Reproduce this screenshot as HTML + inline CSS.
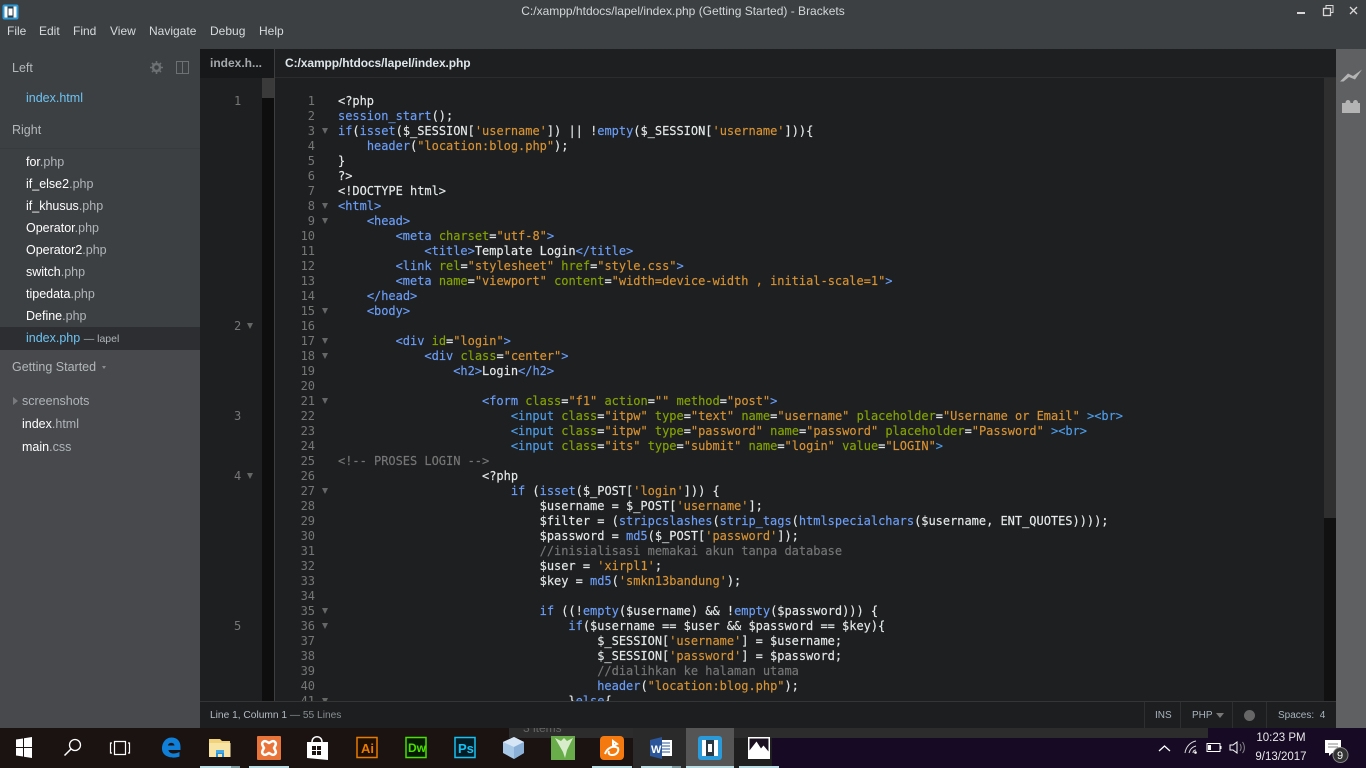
<!DOCTYPE html>
<html><head><meta charset="utf-8"><style>
*{box-sizing:border-box;margin:0;padding:0}
html,body{width:1366px;height:768px;overflow:hidden;background:#170a24;font-family:"Liberation Sans",sans-serif}
div,span.abs{position:absolute}
#code,#nums,#lnums{font:12px/15px "DejaVu Sans Mono",monospace;white-space:pre;position:absolute}
#code{left:338px;top:94px;color:#e6e9e9;letter-spacing:-.024px;-webkit-text-stroke:.15px}
#nums{left:295px;width:20px;top:94px;text-align:right;color:#767676;letter-spacing:-.024px}
.t{color:#6c9ef8}.i{color:#4f9de8}.a{color:#85a300}.s{color:#d89333}.c{color:#767676}
.m{font-size:12px;color:#d6dadd;top:24px;font-family:"Liberation Sans",sans-serif}
.f{left:26px;font-size:12.5px;color:#fff;line-height:16px}
.f b{font-weight:normal;color:#b0b5b9}
.h{color:#b3b7ba;font-size:12.5px;left:12px;line-height:16px}
.g{left:234px;color:#767676;font:12px/15px "DejaVu Sans Mono",monospace}
.ar{width:0;height:0;border-left:3px solid transparent;border-right:3px solid transparent;border-top:6px solid #666}
.st{font-size:10px;color:#a8b4bd;top:709px;line-height:14px}
.dv{width:1px;top:702px;height:26px;background:#2d2f31}
.ul{top:766px;height:2px;background:#b9dde2}
.ud{top:766px;height:2px;background:#7f9a9e}
</style></head><body>
<!-- taskbar bg -->
<div style="left:0;top:728px;width:772px;height:40px;background:#1b1311"></div>
<div style="left:633px;top:728px;width:139px;height:40px;background:#1f1f1f"></div>
<div style="left:509px;top:728px;width:699px;height:10px;background:#2c2c2c"></div>
<div style="left:523px;top:721px;font-size:12px;line-height:14px;color:#666">3 items</div>
<div style="left:633px;top:728px;width:53px;height:40px;background:#2a2a2a"></div>
<div style="left:686px;top:728px;width:48px;height:40px;background:#555"></div>
<!-- title -->
<div style="left:0;top:0;width:1366px;height:49px;background:#3d4043"></div>
<div style="left:0;top:49px;width:200px;height:301px;background:#3d4043"></div>
<div style="left:0;top:350px;width:200px;height:378px;background:#47494d"></div>
<div style="left:0;top:0;width:1366px;text-align:center;color:#d4d7d9;font-size:12px;line-height:22px;padding-left:0">C:/xampp/htdocs/lapel/index.php (Getting Started) - Brackets</div>
<svg style="position:absolute;left:2px;top:4px" width="17" height="16"><rect width="16" height="15" x=".5" y=".5" rx="2" fill="#2a9ad8"/><rect x="2.500" y="2.500" width="12" height="11" fill="#fff"/><rect x="5.500" y="2.500" width="6" height="11" fill="#2a3a44"/><rect x="6.500" y="4.500" width="4" height="7" fill="#fff"/></svg>
<span class="abs m" style="position:absolute;left:7px">File</span>
<span class="abs m" style="position:absolute;left:39px">Edit</span>
<span class="abs m" style="position:absolute;left:73px">Find</span>
<span class="abs m" style="position:absolute;left:110px">View</span>
<span class="abs m" style="position:absolute;left:149px">Navigate</span>
<span class="abs m" style="position:absolute;left:210px">Debug</span>
<span class="abs m" style="position:absolute;left:259px">Help</span>
<svg style="position:absolute;left:1290px;top:0" width="76" height="24" fill="none" stroke="#d8d8d8"><rect x="7" y="12" width="8" height="2" fill="#d8d8d8" stroke="none"/><rect x="33.500" y="8.500" width="7" height="7" stroke-width="1.300"/><path d="M36 8V5.500h7v7h-2.500" stroke-width="1"/><path d="M60 7l7 7M67 7l-7 7" stroke-width="1.300"/></svg>
<!-- sidebar -->
<div class="h" style="top:60px">Left</div>
<svg style="position:absolute;left:150px;top:61px" width="40" height="13" fill="none" stroke="#6d7174"><circle cx="6.500" cy="6.500" r="3.500" stroke-width="2.400"/><path d="M6.500 0v13M0 6.500h13M2 2l9 9M11 2l-9 9" stroke-width="1.600" stroke-dasharray="2 9 2"/><rect x="26.500" y=".5" width="12" height="12"/><path d="M32.500 0v13"/></svg>
<div class="f" style="top:90px;color:#6dc3f2">index.html</div>
<div class="h" style="top:122px">Right</div>
<div style="left:0;top:148px;width:200px;height:1px;background:#383b3d"></div>
<div class="f" style="top:154px">for<b>.php</b></div>
<div class="f" style="top:176px">if_else2<b>.php</b></div>
<div class="f" style="top:198px">if_khusus<b>.php</b></div>
<div class="f" style="top:220px">Operator<b>.php</b></div>
<div class="f" style="top:242px">Operator2<b>.php</b></div>
<div class="f" style="top:264px">switch<b>.php</b></div>
<div class="f" style="top:286px">tipedata<b>.php</b></div>
<div class="f" style="top:308px">Define<b>.php</b></div>
<div style="left:0;top:327px;width:200px;height:23px;background:#2c2e31"></div>
<div class="f" style="top:330px;color:#6dc3f2">index.php <span style="font-size:10.5px;color:#b0b5b9">— lapel</span></div>
<div class="h" style="top:359px">Getting Started</div>
<div style="left:102px;top:366px;width:0;height:0;border-left:2.500px solid transparent;border-right:2.500px solid transparent;border-top:3px solid #8a8d90"></div>
<div style="left:13px;top:397px;width:0;height:0;border-top:4px solid transparent;border-bottom:4px solid transparent;border-left:5px solid #77797c"></div>
<div class="f" style="top:393px;left:22px;color:#b0b5b9">screenshots</div>
<div class="f" style="top:416px;left:22px">index<b>.html</b></div>
<div class="f" style="top:439px;left:22px">main<b>.css</b></div>
<!-- editor -->
<div style="left:200px;top:49px;width:1136px;height:679px;background:#1d1f21"></div>
<div style="left:200px;top:49px;width:74px;height:29px;background:#17181a"></div>
<div style="left:210px;top:56px;color:#a4a8ab;font-size:12px;font-weight:bold;line-height:15px">index.h...</div>
<div style="left:274px;top:49px;width:1px;height:652px;background:#3c3e40"></div>
<div style="left:285px;top:56px;color:#dfe6ea;font-size:12px;font-weight:bold;line-height:15px;letter-spacing:-.08px">C:/xampp/htdocs/lapel/index.php</div>
<div style="left:275px;top:77px;width:1061px;height:1px;background:#2a2c2e"></div>
<div style="left:262px;top:78px;width:12px;height:623px;background:#0e0e0e"></div>
<div style="left:262px;top:78px;width:12px;height:20px;background:#3a3a3a"></div>
<div style="left:200px;top:78px;width:1136px;height:623px;overflow:hidden">
<div style="left:-200px;top:-78px;width:1366px;height:768px">
<div class="g" style="top:94px">1</div>
<div class="g" style="top:319px">2</div>
<div class="g" style="top:409px">3</div>
<div class="g" style="top:469px">4</div>
<div class="g" style="top:619px">5</div>
<div class="ar" style="left:247px;top:323px"></div>
<div class="ar" style="left:247px;top:473px"></div>
<div id="nums">1
2
3
4
5
6
7
8
9
10
11
12
13
14
15
16
17
18
19
20
21
22
23
24
25
26
27
28
29
30
31
32
33
34
35
36
37
38
39
40
41</div>
<div class="ar" style="left:322px;top:128px"></div>
<div class="ar" style="left:322px;top:203px"></div>
<div class="ar" style="left:322px;top:218px"></div>
<div class="ar" style="left:322px;top:308px"></div>
<div class="ar" style="left:322px;top:338px"></div>
<div class="ar" style="left:322px;top:353px"></div>
<div class="ar" style="left:322px;top:398px"></div>
<div class="ar" style="left:322px;top:488px"></div>
<div class="ar" style="left:322px;top:608px"></div>
<div class="ar" style="left:322px;top:623px"></div>
<div class="ar" style="left:322px;top:698px"></div>
<pre id="code">&lt;?php
<span class="t">session_start</span>();
<span class="t">if</span>(<span class="t">isset</span>($_SESSION[<span class="s">'username'</span>]) || !<span class="t">empty</span>($_SESSION[<span class="s">'username'</span>])){
    <span class="t">header</span>(<span class="s">"location:blog.php"</span>);
}
?&gt;
&lt;!DOCTYPE html&gt;
<span class="t">&lt;html&gt;</span>
    <span class="t">&lt;head&gt;</span>
        <span class="t">&lt;meta</span> <span class="a">charset</span>=<span class="s">"utf-8"</span><span class="t">&gt;</span>
            <span class="t">&lt;title&gt;</span>Template Login<span class="t">&lt;/title&gt;</span>
        <span class="t">&lt;link</span> <span class="a">rel</span>=<span class="s">"stylesheet"</span> <span class="a">href</span>=<span class="s">"style.css"</span><span class="t">&gt;</span>
        <span class="t">&lt;meta</span> <span class="a">name</span>=<span class="s">"viewport"</span> <span class="a">content</span>=<span class="s">"width=device-width , initial-scale=1"</span><span class="t">&gt;</span>
    <span class="t">&lt;/head&gt;</span>
    <span class="t">&lt;body&gt;</span>

        <span class="t">&lt;div</span> <span class="a">id</span>=<span class="s">"login"</span><span class="t">&gt;</span>
            <span class="t">&lt;div</span> <span class="a">class</span>=<span class="s">"center"</span><span class="t">&gt;</span>
                <span class="t">&lt;h2&gt;</span>Login<span class="t">&lt;/h2&gt;</span>

                    <span class="t">&lt;form</span> <span class="a">class</span>=<span class="s">"f1"</span> <span class="a">action</span>=<span class="s">""</span> <span class="a">method</span>=<span class="s">"post"</span><span class="t">&gt;</span>
                        <span class="i">&lt;input</span> <span class="a">class</span>=<span class="s">"itpw"</span> <span class="a">type</span>=<span class="s">"text"</span> <span class="a">name</span>=<span class="s">"username"</span> <span class="a">placeholder</span>=<span class="s">"Username or Email"</span> <span class="i">&gt;&lt;br&gt;</span>
                        <span class="i">&lt;input</span> <span class="a">class</span>=<span class="s">"itpw"</span> <span class="a">type</span>=<span class="s">"password"</span> <span class="a">name</span>=<span class="s">"password"</span> <span class="a">placeholder</span>=<span class="s">"Password"</span> <span class="i">&gt;&lt;br&gt;</span>
                        <span class="i">&lt;input</span> <span class="a">class</span>=<span class="s">"its"</span> <span class="a">type</span>=<span class="s">"submit"</span> <span class="a">name</span>=<span class="s">"login"</span> <span class="a">value</span>=<span class="s">"LOGIN"</span><span class="i">&gt;</span>
<span class="c">&lt;!-- PROSES LOGIN --&gt;</span>
                    &lt;?php
                        <span class="t">if</span> (<span class="t">isset</span>($_POST[<span class="s">'login'</span>])) {
                            $username = $_POST[<span class="s">'username'</span>];
                            $filter = (<span class="t">stripcslashes</span>(<span class="t">strip_tags</span>(<span class="t">htmlspecialchars</span>($username, ENT_QUOTES))));
                            $password = <span class="t">md5</span>($_POST[<span class="s">'password'</span>]);
                            <span class="c">//inisialisasi memakai akun tanpa database</span>
                            $user = <span class="s">'xirpl1'</span>;
                            $key = <span class="t">md5</span>(<span class="s">'smkn13bandung'</span>);

                            <span class="t">if</span> ((!<span class="t">empty</span>($username) &amp;&amp; !<span class="t">empty</span>($password))) {
                                <span class="t">if</span>($username == $user &amp;&amp; $password == $key){
                                    $_SESSION[<span class="s">'username'</span>] = $username;
                                    $_SESSION[<span class="s">'password'</span>] = $password;
                                    <span class="c">//dialihkan ke halaman utama</span>
                                    <span class="t">header</span>(<span class="s">"location:blog.php"</span>);
                                }<span class="t">else</span>{</pre>
</div></div>
<div style="left:1324px;top:78px;width:12px;height:440px;background:#2f2f2f"></div>
<div style="left:1324px;top:518px;width:12px;height:183px;background:#111"></div>
<div style="left:1336px;top:49px;width:30px;height:679px;background:#5f6062"></div>
<svg style="position:absolute;left:1340px;top:68px" width="24" height="46" fill="#b4b4b4"><path d="M0 13.500L8 5.500L13 8L22 1.500L15 11.500L9 9L3.500 13.500Z"/><path d="M2 35h3.500c0-4 5-4 5 0h2.500c0-4 5-4 5 0H20v10H2Z"/></svg>
<!-- status -->
<div style="left:200px;top:701px;width:1136px;height:1px;background:#333537"></div>
<div style="left:200px;top:702px;width:1136px;height:26px;background:#1c1e20"></div>
<div class="st" style="left:210px;color:#b6bdc3;font-size:10.2px">Line 1, Column 1 <span style="color:#8b8f92">— 55 Lines</span></div>
<div class="dv" style="left:1144px"></div><div class="dv" style="left:1180px"></div><div class="dv" style="left:1232px"></div><div class="dv" style="left:1266px"></div>
<div class="st" style="left:1155px">INS</div>
<div class="st" style="left:1192px">PHP</div>
<div style="left:1216px;top:713px;width:0;height:0;border-left:4px solid transparent;border-right:4px solid transparent;border-top:5px solid #777"></div>
<div style="left:1244px;top:710px;width:11px;height:11px;border-radius:50%;background:#666"></div>
<div class="st" style="left:1278px">Spaces: &nbsp;4</div>
<!-- taskbar icons -->
<svg style="position:absolute;left:0;top:728px" width="800" height="40" font-family="Liberation Sans,sans-serif">
<path d="M16 11.500l7-1v8.500h-7zM24 10.300l8-1.300v10h-8zM16 20h7v8.500l-7-1zM24 20h8v10l-8-1.300z" fill="#fff"/>
<circle cx="75" cy="17" r="5.500" fill="none" stroke="#fff" stroke-width="1.300"/><path d="M71 21l-6.500 6.500" stroke="#fff" stroke-width="1.500"/>
<path d="M114.500 13.500h11v13h-11zM112 15h-1.500v10H112M128 15h1.500v10H128" fill="none" stroke="#fff" stroke-width="1.200"/>
<path d="M162 20.500c0-5.500 3.500-11 9.500-11 5.500 0 9 3.500 9 9.500v3h-12c.5 4 6 4.500 11 2v4.500c-6 2.500-17.500 1-17.500-8zM168 17.500h6.500c-.3-3.500-6-3.500-6.500 0z" fill="#0f7fd8"/>
<path d="M209 11h11l2 2h8v4h-21z" fill="#f1d27a"/><path d="M209 15h21.500v14H209z" fill="#f8e5a5"/><path d="M216 24h8v5h-2v-3h-4v3h-2z" fill="#2a92d6"/><rect x="216" y="22" width="8" height="3" fill="#45a8e0"/>
<rect x="257" y="8" width="24" height="24" rx="1" fill="#e8743a"/><path d="M263 14c2-2 4 0 6 1 2-1 4-3 6-1s0 4-1 6c1 2 3 4 1 6s-4 0-6-1c-2 1-4 3-6 1s0-4 1-6c-1-2-3-4-1-6z" fill="none" stroke="#fff" stroke-width="2.500"/>
<path d="M307 14h21v18l-21-2z" fill="#fff"/><path d="M312 14c0-7 10-7 10 0" fill="none" stroke="#fff" stroke-width="1.500"/><path d="M312 18h4v4h-4zM317 18h4v4h-4zM312 23h4v4h-4zM317 23h4v4h-4z" fill="#1b1311"/>
<rect x="357" y="9.500" width="20" height="20" fill="#1e0f00" stroke="#e87a00" stroke-width="1.500"/><text x="361" y="25" font-size="13" font-weight="bold" fill="#e87a00">Ai</text>
<rect x="406" y="9.500" width="20" height="20" fill="#051a00" stroke="#4be000" stroke-width="1.500"/><text x="408" y="24" font-size="12" font-weight="bold" fill="#4be000">Dw</text>
<rect x="455" y="9.500" width="20" height="20" fill="#001d26" stroke="#17c2f2" stroke-width="1.500"/><text x="458" y="25" font-size="13" font-weight="bold" fill="#17c2f2">Ps</text>
<path d="M514 9l10 5v11l-10 6-11-6V14z" fill="#a8c8e8"/><path d="M503 14l11 5 10-5-10-5z" fill="#d6e6f6"/><path d="M514 19v12l10-6V14z" fill="#8ab0d8"/>
<rect x="551" y="8" width="24" height="24" fill="#69ad4b"/><path d="M555 10l8 14 2 6 2-8 6-12-6 3-3-3-3 3z" fill="#d8eccc"/>
<rect x="600" y="8" width="24" height="24" rx="4" fill="#f47a10"/><path d="M605 26c2-6 8-9 13-6 1 3-1 7-6 7-3 0-4-2-3-4M613 13l4 3-4 2z" fill="none" stroke="#fff" stroke-width="2"/>
<rect x="659" y="12" width="13" height="16" fill="#fff"/><path d="M662 15h8M662 18h8M662 21h8M662 24h8" stroke="#2b579a"/><path d="M650 12l12-3v22l-12-3z" fill="#2b579a"/><text x="651" y="25" font-size="11" font-weight="bold" fill="#fff">W</text>
<rect x="698" y="8" width="24" height="24" rx="3" fill="#2a9ad8"/><rect x="702" y="12" width="16" height="16" fill="#fff"/><rect x="706" y="12" width="8" height="16" fill="#2a3a44"/><rect x="708" y="16" width="4" height="8" fill="#fff"/>
<rect x="748" y="9" width="22" height="22" fill="#fff"/><path d="M749.500 10.500h19v13l-5-6-2.500 3-4.500-7-7 9z" fill="#1a1020"/>
</svg>
<div class="ul" style="left:200px;width:31px"></div><div class="ud" style="left:231px;width:9px"></div>
<div class="ul" style="left:249px;width:40px"></div>
<div class="ul" style="left:592px;width:40px"></div>
<div class="ul" style="left:641px;width:31px"></div><div class="ud" style="left:672px;width:9px"></div>
<div class="ul" style="left:686px;width:48px"></div>
<div class="ul" style="left:739px;width:40px"></div>
<!-- tray -->
<svg style="position:absolute;left:1150px;top:728px" width="216" height="40" fill="none" stroke="#fff">
<path d="M9 23l5.500-5 5.500 5" stroke-width="1.300"/>
<path d="M35 25c1-7 6-11 11-12M39 25c1-4 3-6 7-7M43 25c0-2 1-3 3-3" stroke="#ddd"/><circle cx="45.500" cy="24.500" r="1.300" fill="#fff" stroke="none"/>
<rect x="57" y="15.500" width="13" height="8"/><rect x="58" y="17" width="3" height="5" fill="#fff" stroke="none"/><rect x="70" y="18" width="1.500" height="3" fill="#fff" stroke="none"/>
<path d="M80 17h3l4-3v11l-4-3h-3z"/><path d="M90 16c1.500 2 1.500 5 0 7M92.500 14c2.500 3.500 2.500 8 0 11" stroke="#888"/>
</svg>
<div style="left:1251px;top:729px;width:60px;text-align:center;color:#e8e8e8;font-size:11.5px;line-height:19px">10:23 PM<br>9/13/2017</div>
<svg style="position:absolute;left:1320px;top:738px" width="32" height="30"><path d="M5 2h16v13h-9l-3 3v-3H5z" fill="#fff"/><path d="M8 6h10M8 9h10" stroke="#888"/><circle cx="20.500" cy="17" r="7.500" fill="#333" stroke="#888"/><text x="17" y="21" font-size="11" font-family="Liberation Sans,sans-serif" fill="#fff">9</text></svg>
</body></html>
